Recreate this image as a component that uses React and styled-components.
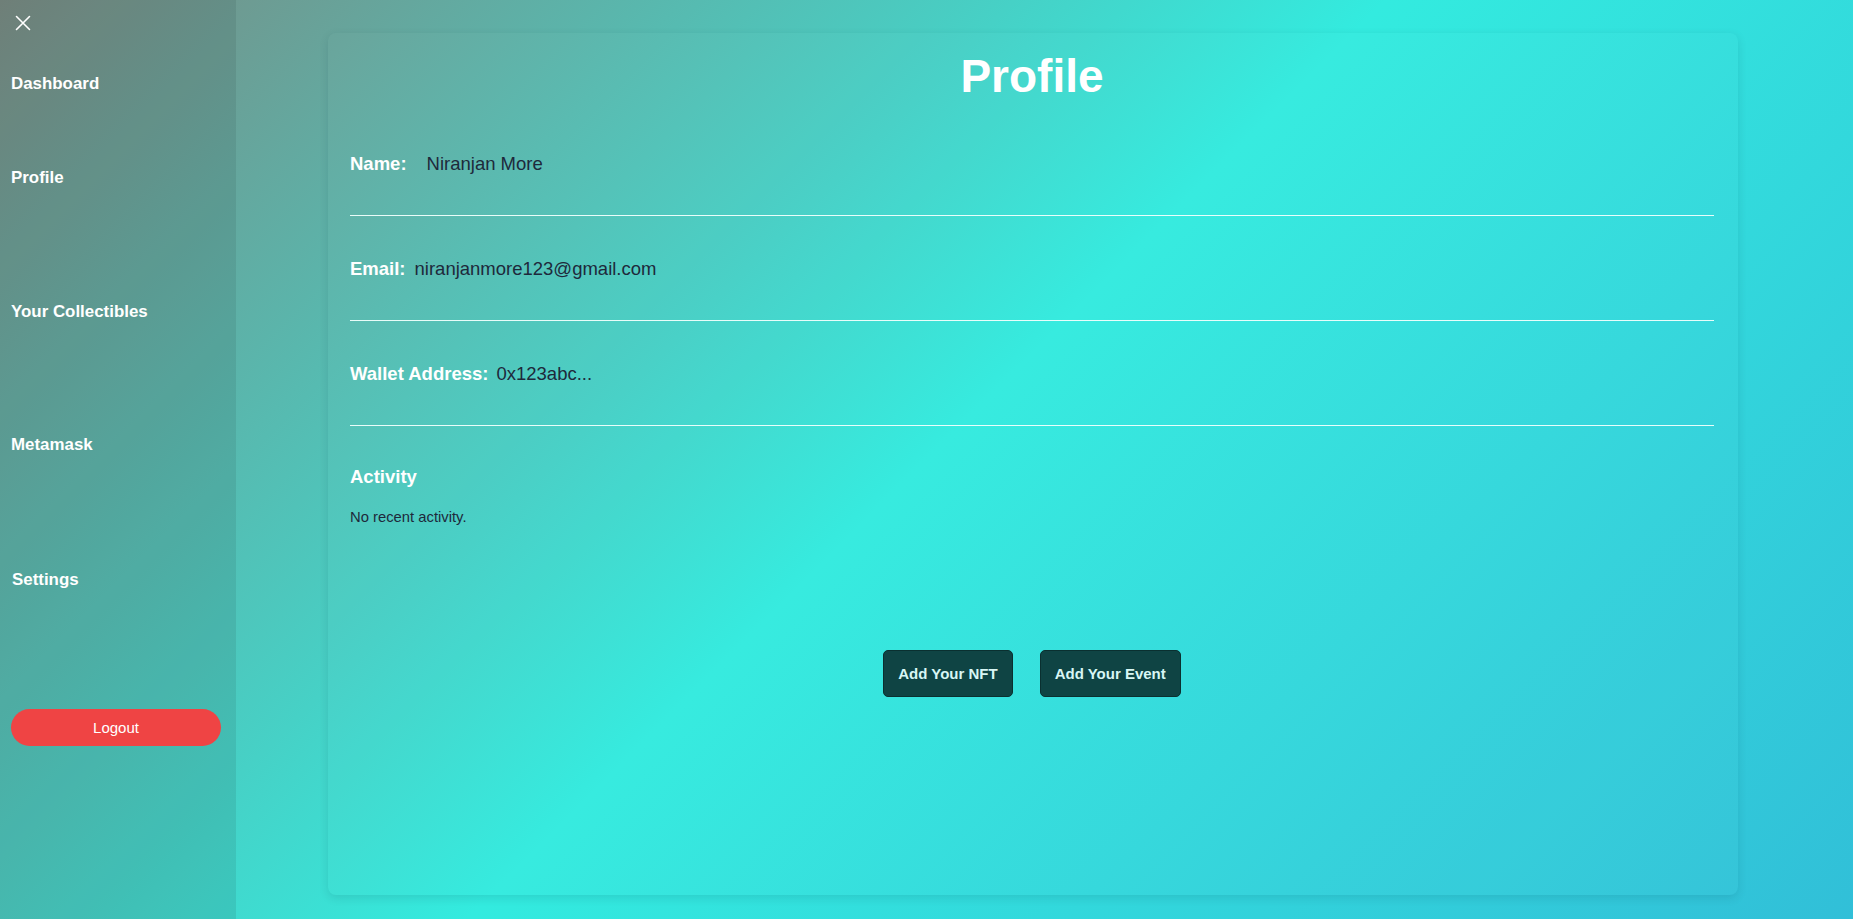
import React from 'react';
import styled, { createGlobalStyle } from 'styled-components';

const GlobalStyle = createGlobalStyle`
  html, body {
    margin: 0;
    padding: 0;
    height: 100%;
  }
  body {
    font-family: "Liberation Sans", Arial, sans-serif;
    background: linear-gradient(135deg, #7a8a82 0%, #33ebdf 50%, #31bfd8 100%);
    background-attachment: fixed;
  }
  #root {
    height: 100%;
  }
`;

const Layout = styled.div`
  display: flex;
  height: 919px;
`;

const Sidebar = styled.aside`
  width: 236px;
  flex-shrink: 0;
  background: rgba(20, 40, 40, 0.1);
  padding: 14px 15px 0 11px;
  box-sizing: border-box;
  display: flex;
  flex-direction: column;
`;

const CloseButton = styled.button`
  background: none;
  border: none;
  padding: 0;
  margin-left: 3px;
  width: 18px;
  height: 18px;
  cursor: pointer;
  display: flex;
  align-items: center;
  justify-content: center;
`;

const NavItem = styled.a`
  color: #fff;
  font-weight: 700;
  font-size: 16.9px;
  line-height: 19px;
  text-decoration: none;
  margin-top: ${(p) => p.$top}px;
  padding-left: ${(p) => p.$indent || 0}px;
`;

const LogoutButton = styled.button`
  margin-top: 120px;
  width: 210px;
  height: 37px;
  border-radius: 999px;
  border: none;
  background: #ef4444;
  color: #fff;
  font-family: inherit;
  font-size: 15px;
  cursor: pointer;
`;

const Main = styled.main`
  flex: 1;
  padding: 33px 115px 24px 92px;
  box-sizing: border-box;
  display: flex;
`;

const Card = styled.section`
  flex: 1;
  border-radius: 8px;
  background: rgba(255, 255, 255, 0.02);
  box-shadow: 0 3px 10px rgba(0, 40, 60, 0.12);
  padding: 18px 24px 0 22px;
  display: flex;
  flex-direction: column;
`;

const Title = styled.h1`
  margin: 0 0 9px;
  text-align: center;
  color: #fff;
  font-size: 46px;
  line-height: 51px;
  font-weight: 700;
`;

const Row = styled.div`
  display: flex;
  align-items: baseline;
  padding: 42px 0 41px;
  border-bottom: 1px solid rgba(240, 255, 252, 0.95);
  font-size: 18.5px;
  line-height: 21px;
`;

const Label = styled.span`
  color: #fff;
  font-weight: 700;
`;

const Value = styled.span`
  color: #1e293b;
  margin-left: ${(p) => p.$gap}px;
`;

const SectionTitle = styled.h3`
  margin: 40px 0 22px;
  color: #fff;
  font-size: 18.5px;
  line-height: 21px;
  font-weight: 700;
`;

const Muted = styled.p`
  margin: 0;
  color: #1e293b;
  font-size: 14.8px;
  line-height: 17px;
`;

const Actions = styled.div`
  display: flex;
  justify-content: center;
  gap: 27px;
  margin-top: 124px;
`;

const ActionButton = styled.button`
  background: #0f4444;
  border: 1px solid #0a3030;
  border-radius: 5px;
  color: #d8f6f4;
  font-family: inherit;
  font-weight: 700;
  font-size: 15px;
  line-height: 17px;
  padding: 14px 14px;
  cursor: pointer;
`;

const fields = [
  { label: 'Name:', value: 'Niranjan More', gap: 20 },
  { label: 'Email:', value: 'niranjanmore123@gmail.com', gap: 9 },
  { label: 'Wallet Address:', value: '0x123abc...', gap: 8 },
];

export default function App() {
  return (
    <>
      <GlobalStyle />
      <Layout>
        <Sidebar>
          <CloseButton aria-label="Close">
            <svg width="16" height="16" viewBox="0 0 16 16" fill="none">
              <path d="M1.5 1.5L14.5 14.5M14.5 1.5L1.5 14.5" stroke="#fff" strokeWidth="1.6" strokeLinecap="round" />
            </svg>
          </CloseButton>
          <NavItem $top={42}>Dashboard</NavItem>
          <NavItem $top={75}>Profile</NavItem>
          <NavItem $top={115}>Your Collectibles</NavItem>
          <NavItem $top={114}>Metamask</NavItem>
          <NavItem $top={116} $indent={1}>Settings</NavItem>
          <LogoutButton>Logout</LogoutButton>
        </Sidebar>
        <Main>
          <Card>
            <Title>Profile</Title>
            {fields.map((f) => (
              <Row key={f.label}>
                <Label>{f.label}</Label>
                <Value $gap={f.gap}>{f.value}</Value>
              </Row>
            ))}
            <SectionTitle>Activity</SectionTitle>
            <Muted>No recent activity.</Muted>
            <Actions>
              <ActionButton>Add Your NFT</ActionButton>
              <ActionButton>Add Your Event</ActionButton>
            </Actions>
          </Card>
        </Main>
      </Layout>
    </>
  );
}
